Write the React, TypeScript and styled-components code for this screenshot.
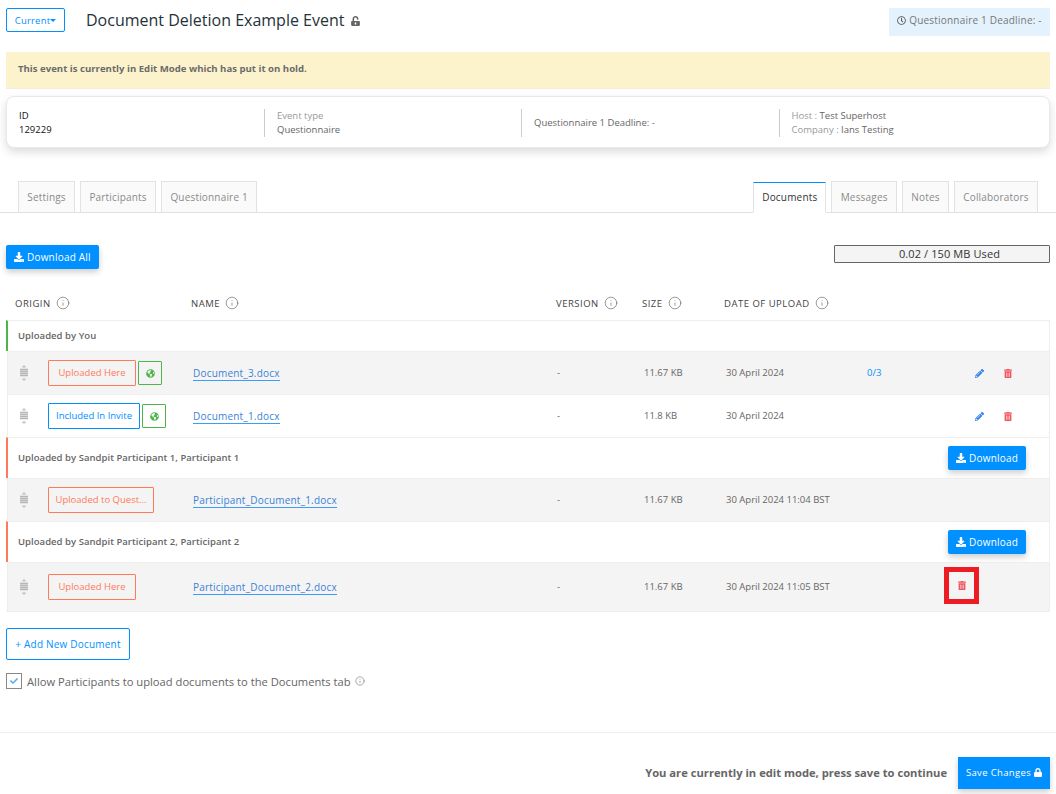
import React from "react";
import styled, { createGlobalStyle } from "styled-components";
import { FaCheck, FaDownload, FaGlobeAmericas, FaLock, FaPencilAlt, FaRegClock, FaTrashAlt, FaUnlockAlt } from "react-icons/fa";
import { Info } from "lucide-react";

const BLUE = "#0090ff";
const ORANGE = "#ff7a59";
const GREEN = "#4cb648";

const GlobalStyle = createGlobalStyle`
  html, body {
    margin: 0;
    background: #fff;
    font-family: "Open Sans", "Liberation Sans", sans-serif;
    overflow: hidden;
  }
  * { box-sizing: border-box; }
`;

const Page = styled.div`
  width: 1056px;
  height: 794px;
  padding-top: 8px;
  overflow: hidden;
`;

const Header = styled.header`
  display: flex;
  align-items: flex-start;
  padding: 0 6px;
  height: 44px;
`;

const CurrentButton = styled.button`
  width: 59px;
  height: 24px;
  padding: 0;
  border: 1px solid ${BLUE};
  border-radius: 2px;
  background: #fff;
  color: ${BLUE};
  font: 400 9.5px "Open Sans", sans-serif;
  letter-spacing: 0.2px;
  display: flex;
  align-items: center;
  justify-content: center;
  &::after {
    content: "";
    border-top: 3px solid ${BLUE};
    border-left: 3px solid transparent;
    border-right: 3px solid transparent;
  }
`;

const Title = styled.h1`
  margin: 1px 0 0 21px;
  font-size: 16px;
  line-height: 22px;
  font-weight: 400;
  color: #263238;
  display: flex;
  align-items: center;
  gap: 7px;
  svg { color: #666; width: 9px; height: 10px; margin-top: 2px; }
`;

const DeadlineBox = styled.div`
  margin-left: auto;
  width: 161px;
  height: 28px;
  background: #e3f2fd;
  color: #777;
  font-size: 10px;
  letter-spacing: 0.2px;
  display: flex;
  align-items: center;
  justify-content: center;
  gap: 3px;
  padding-bottom: 4px;
  svg { color: #555; width: 9px; height: 9px; }
`;

const Alert = styled.div`
  margin: 0 6px;
  height: 37px;
  background: #fcf3cd;
  border-bottom: 1px solid #fbe9df;
  color: #6b6b6b;
  font-size: 9.6px;
  font-weight: 700;
  line-height: 34px;
  padding-left: 12px;
`;

const InfoCard = styled.section`
  margin: 7px 6px 0;
  height: 52px;
  border: 1px solid #e8e8e8;
  border-radius: 8px;
  background: #fff;
  box-shadow: 0 4px 10px rgba(0, 0, 0, 0.14);
  display: grid;
  grid-template-columns: 257px 257px 257.5px 1fr;
  padding: 12px 0;
`;

const InfoCell = styled.div<{ $first?: boolean }>`
  border-left: ${({ $first }) => ($first ? "none" : "1px solid #ccc")};
  padding-left: 12px;
  font-size: 9.5px;
  line-height: 14px;
  color: ${({ $first }) => ($first ? "#111" : "#666")};
  display: flex;
  flex-direction: column;
  justify-content: center;
`;

const Muted = styled.span`
  color: #999;
`;

const TabBar = styled.nav`
  margin-top: 33px;
  height: 32px;
  border-bottom: 1px solid #dfe1e6;
  padding: 0 18px 0 18px;
  display: flex;
  align-items: flex-end;
  gap: 5px;
`;

const Tab = styled.div<{ $active?: boolean; $push?: boolean }>`
  height: 31px;
  margin-left: ${({ $push }) => ($push ? "auto" : "0")};
  margin-bottom: ${({ $active }) => ($active ? "-1px" : "0")};
  padding: ${({ $active }) => ($active ? "0 8px 2px" : "0 8.3px")};
  display: flex;
  align-items: center;
  font-size: 10px;
  letter-spacing: 0.18px;
  color: ${({ $active }) => ($active ? "#333" : "#8a8a8a")};
  background: ${({ $active }) => ($active ? "#fff" : "#fafafa")};
  border: 1px solid #e2e2e2;
  border-top: 1px solid ${({ $active }) => ($active ? BLUE : "#e2e2e2")};
  border-bottom: ${({ $active }) => ($active ? "1px solid #fff" : "none")};
`;

const Toolbar = styled.div`
  margin-top: 32px;
  padding: 0 6px;
  display: flex;
  justify-content: space-between;
  align-items: flex-start;
`;

const PrimaryButton = styled.button`
  height: 24px;
  padding: 0 8px 1px;
  border: none;
  border-radius: 2px;
  background: ${BLUE};
  color: #fff;
  font: 400 10px "Open Sans", sans-serif;
  letter-spacing: 0.2px;
  display: inline-flex;
  align-items: center;
  gap: 3px;
  box-shadow: 0 3px 6px rgba(0, 0, 0, 0.2);
  svg { width: 10px; height: 10px; flex: none; }
`;

const UsageBox = styled.div`
  width: 216px;
  height: 18px;
  border: 1px solid #666;
  border-radius: 1px;
  background: #f4f4f4;
  color: #333;
  font-size: 11px;
  letter-spacing: 0.1px;
  line-height: 16px;
  padding-left: 15px;
  text-align: center;
`;

const COLUMNS = "184px 365px 87px 82px 141px 108px 1fr";

const TableHead = styled.div`
  margin: 21px 6px 4px;
  height: 26px;
  display: grid;
  grid-template-columns: 176px 365px 86px 82px 1fr;
  padding-left: 9px;
  align-items: center;
`;

const HeadCell = styled.div`
  font-size: 9.5px;
  letter-spacing: 0.5px;
  color: #444;
  display: flex;
  align-items: center;
  gap: 5px;
  svg { width: 14px; height: 14px; color: #555; }
`;

const Table = styled.div`
  margin: 0 6px;
  border-right: 1px solid #eee;
  border-bottom: 1px solid #eee;
`;

const GroupRow = styled.div<{ $accent: string; $height: number }>`
  height: ${({ $height }) => $height}px;
  border-left: 2px solid ${({ $accent }) => $accent};
  border-top: 1px solid #eee;
  background: #fff;
  padding: 0 23px 0 10px;
  display: flex;
  align-items: center;
  justify-content: space-between;
`;

const GroupLabel = styled.span`
  margin-bottom: 2px;
  font-size: 9.5px;
  font-weight: 600;
  letter-spacing: 0.04px;
  color: #666;
`;

const DocRow = styled.div<{ $height: number; $plain?: boolean }>`
  height: ${({ $height }) => $height}px;
  margin-left: 1px;
  border-left: 1px solid #eee;
  border-top: 1px solid #eee;
  background: ${({ $plain }) => ($plain ? "#fff" : "#f4f4f4")};
  display: grid;
  grid-template-columns: ${COLUMNS};
  align-items: center;
  font-size: 9.5px;
  color: #666;
  > span { margin-bottom: 2px; }
`;

const OriginCell = styled.div`
  display: flex;
  align-items: center;
  padding-left: 12px;
`;

const Grip = styled.svg`
  width: 8px;
  height: 16px;
  margin-right: 20px;
  flex: none;
`;

const OriginBadge = styled.div<{ $color: string; $width: number }>`
  width: ${({ $width }) => $width}px;
  height: 26px;
  padding-bottom: 2px;
  border: 1px solid ${({ $color }) => $color};
  border-radius: 1px;
  color: ${({ $color }) => $color};
  font-size: 9.5px;
  display: flex;
  align-items: center;
  justify-content: center;
  white-space: nowrap;
`;

const GlobeBadge = styled.div`
  width: 24px;
  height: 24px;
  margin-left: 2px;
  border: 1px solid ${GREEN};
  border-radius: 1px;
  display: flex;
  align-items: center;
  justify-content: center;
  color: ${GREEN};
  svg { width: 9px; height: 9px; }
`;

const DocLink = styled.a`
  justify-self: start;
  margin-left: 1px;
  margin-top: 2px;
  color: #3b82d8;
  font-size: 10px;
  letter-spacing: 0.2px;
  line-height: 13px;
  border-bottom: 1px solid #3f9cf5;
`;

const CountLink = styled.span`
  color: ${BLUE};
  font-size: 9.5px;
`;

const ActionCell = styled.div<{ $gap?: number }>`
  display: flex;
  align-items: center;
  gap: ${({ $gap }) => $gap ?? 0}px;
`;

const EditIcon = styled(FaPencilAlt)`
  width: 9px;
  height: 9px;
  color: #2f80ed;
`;

const TrashIcon = styled(FaTrashAlt)`
  width: 8px;
  height: 9px;
  color: #f0545c;
`;

const HighlightBox = styled.div`
  width: 35px;
  height: 37px;
  margin: 0 0 3px -31px;
  border: 5px solid #ed1c24;
  display: flex;
  align-items: center;
  justify-content: center;
`;

const AddButton = styled.button`
  margin: 16px 0 0 6px;
  width: 124px;
  height: 32px;
  border: 1px solid ${BLUE};
  border-radius: 2px;
  background: #fff;
  color: ${BLUE};
  font: 400 10px "Open Sans", sans-serif;
  letter-spacing: 0.2px;
  display: block;
`;

const CheckRow = styled.label`
  margin: 13px 0 0 6px;
  display: flex;
  align-items: center;
  gap: 5px;
  font-size: 11.2px;
  color: #666;
  svg.info { width: 10px; height: 10px; margin-left: -1px; color: #777; }
`;

const CheckBox = styled.span`
  width: 16px;
  height: 16px;
  border: 1px solid #888;
  display: flex;
  align-items: center;
  justify-content: center;
  color: #5aa9e6;
  svg { width: 8px; height: 8px; }
`;

const Footer = styled.footer`
  margin-top: 43px;
  border-top: 1px solid #eee;
  padding: 24px 6px 0 0;
  display: flex;
  justify-content: flex-end;
  align-items: center;
  gap: 11px;
`;

const FooterNote = styled.span`
  margin-bottom: 2px;
  font-size: 11.2px;
  font-weight: 700;
  color: #666;
`;

const SaveButton = styled(PrimaryButton)`
  width: 92px;
  height: 32px;
  padding: 0 0 2px;
  justify-content: center;
  border-radius: 0;
  font-size: 9.5px;
  letter-spacing: 0.35px;
  white-space: nowrap;
  svg { width: 8px; height: 9px; }
`;

const DragHandle = () => (
  <Grip viewBox="0 0 8 16">
    <path d="M4 0 L6.5 2.5 H1.5 Z M4 16 L6.5 13.5 H1.5 Z" fill="#c4c4c4" />
    <path d="M0 4.5 H8 M0 6.5 H8 M0 8.5 H8 M0 10.5 H8" stroke="#b5b5b5" strokeWidth="1.3" />
  </Grip>
);

const Hint = () => <Info strokeWidth={1} />;

const App: React.FC = () => (
  <Page>
    <GlobalStyle />
    <Header>
      <CurrentButton>Current</CurrentButton>
      <Title>
        Document Deletion Example Event <FaUnlockAlt />
      </Title>
      <DeadlineBox>
        <FaRegClock /> Questionnaire 1 Deadline: -
      </DeadlineBox>
    </Header>
    <Alert>This event is currently in Edit Mode which has put it on hold.</Alert>
    <InfoCard>
      <InfoCell $first>
        <span>ID</span>
        <span>129229</span>
      </InfoCell>
      <InfoCell>
        <Muted>Event type</Muted>
        <span>Questionnaire</span>
      </InfoCell>
      <InfoCell>
        <span>Questionnaire 1 Deadline: -</span>
      </InfoCell>
      <InfoCell>
        <span>
          <Muted>Host : </Muted>Test Superhost
        </span>
        <span>
          <Muted>Company : </Muted>Ians Testing
        </span>
      </InfoCell>
    </InfoCard>
    <TabBar>
      <Tab>Settings</Tab>
      <Tab>Participants</Tab>
      <Tab>Questionnaire 1</Tab>
      <Tab $active $push>
        Documents
      </Tab>
      <Tab>Messages</Tab>
      <Tab>Notes</Tab>
      <Tab>Collaborators</Tab>
    </TabBar>
    <Toolbar>
      <PrimaryButton>
        <FaDownload /> Download All
      </PrimaryButton>
      <UsageBox>0.02 / 150 MB Used</UsageBox>
    </Toolbar>
    <TableHead>
      <HeadCell>
        ORIGIN <Hint />
      </HeadCell>
      <HeadCell>
        NAME <Hint />
      </HeadCell>
      <HeadCell>
        VERSION <Hint />
      </HeadCell>
      <HeadCell>
        SIZE <Hint />
      </HeadCell>
      <HeadCell>
        DATE OF UPLOAD <Hint />
      </HeadCell>
    </TableHead>
    <Table>
      <GroupRow $accent={GREEN} $height={31}>
        <GroupLabel>Uploaded by You</GroupLabel>
      </GroupRow>
      <DocRow $height={43}>
        <OriginCell>
          <DragHandle />
          <OriginBadge $color={ORANGE} $width={88}>
            Uploaded Here
          </OriginBadge>
          <GlobeBadge>
            <FaGlobeAmericas />
          </GlobeBadge>
        </OriginCell>
        <DocLink>Document_3.docx</DocLink>
        <span>-</span>
        <span>11.67 KB</span>
        <span>30 April 2024</span>
        <CountLink>0/3</CountLink>
        <ActionCell $gap={20}>
          <EditIcon />
          <TrashIcon />
        </ActionCell>
      </DocRow>
      <DocRow $height={43} $plain>
        <OriginCell>
          <DragHandle />
          <OriginBadge $color={BLUE} $width={92}>
            Included In Invite
          </OriginBadge>
          <GlobeBadge>
            <FaGlobeAmericas />
          </GlobeBadge>
        </OriginCell>
        <DocLink>Document_1.docx</DocLink>
        <span>-</span>
        <span>11.8 KB</span>
        <span>30 April 2024</span>
        <span />
        <ActionCell $gap={20}>
          <EditIcon />
          <TrashIcon />
        </ActionCell>
      </DocRow>
      <GroupRow $accent={ORANGE} $height={41}>
        <GroupLabel>Uploaded by Sandpit Participant 1, Participant 1</GroupLabel>
        <PrimaryButton>
          <FaDownload /> Download
        </PrimaryButton>
      </GroupRow>
      <DocRow $height={43}>
        <OriginCell>
          <DragHandle />
          <OriginBadge $color={ORANGE} $width={106}>
            Uploaded to Quest...
          </OriginBadge>
        </OriginCell>
        <DocLink>Participant_Document_1.docx</DocLink>
        <span>-</span>
        <span>11.67 KB</span>
        <span>30 April 2024 11:04 BST</span>
      </DocRow>
      <GroupRow $accent={ORANGE} $height={41}>
        <GroupLabel>Uploaded by Sandpit Participant 2, Participant 2</GroupLabel>
        <PrimaryButton>
          <FaDownload /> Download
        </PrimaryButton>
      </GroupRow>
      <DocRow $height={49}>
        <OriginCell>
          <DragHandle />
          <OriginBadge $color={ORANGE} $width={88}>
            Uploaded Here
          </OriginBadge>
        </OriginCell>
        <DocLink>Participant_Document_2.docx</DocLink>
        <span>-</span>
        <span>11.67 KB</span>
        <span>30 April 2024 11:05 BST</span>
        <span />
        <ActionCell>
          <HighlightBox>
            <TrashIcon />
          </HighlightBox>
        </ActionCell>
      </DocRow>
    </Table>
    <AddButton>+ Add New Document</AddButton>
    <CheckRow>
      <CheckBox>
        <FaCheck />
      </CheckBox>
      Allow Participants to upload documents to the Documents tab
      <Info className="info" strokeWidth={1.5} />
    </CheckRow>
    <Footer>
      <FooterNote>You are currently in edit mode, press save to continue</FooterNote>
      <SaveButton>
        Save Changes <FaLock />
      </SaveButton>
    </Footer>
  </Page>
);

export default App;
